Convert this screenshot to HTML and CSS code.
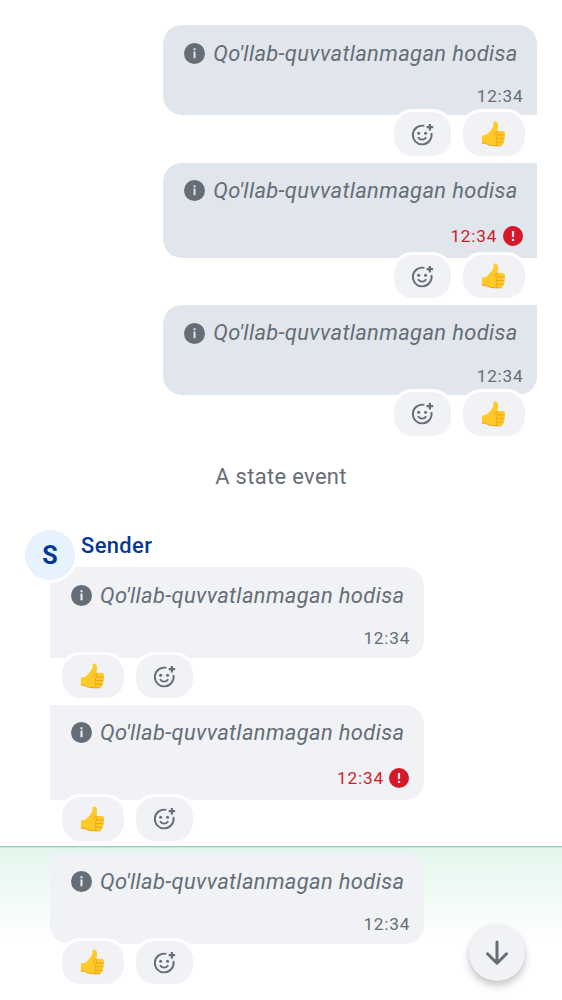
FILE: index.html
```html
<!DOCTYPE html>
<html lang="uz">
<head>
<meta charset="utf-8">
<title>Timeline</title>
<link rel="stylesheet" href="styles.css">
</head>
<body>
<svg class="defs" aria-hidden="true">
  <symbol id="info" viewBox="0 0 21 21"><circle cx="10.5" cy="10.5" r="10.5" fill="currentColor"/><path class="mark" d="M9.5 5.2h2v2.1h-2zM9.5 8.5h2v6.8h-2z"/></symbol>
  <symbol id="error" viewBox="0 0 20 20"><circle cx="10" cy="10" r="10" fill="currentColor"/><path class="mark" d="M8.9 5h2.2v6H8.9zM8.9 12.8h2.2V15H8.9z"/></symbol>
  <symbol id="react" viewBox="0 0 24 24"><g fill="none" stroke="currentColor" stroke-width="2"><path d="M14 3A9.8 9.8 0 1 0 21.3 10.5"/><path d="M7.4 14.8q1.3 2.5 4.2 2.5t4.2-2.5" stroke-width="1.9"/><path d="M19.7 1v6.8M16.3 4.4h6.8" stroke-width="2.3"/></g><g fill="currentColor"><circle cx="8" cy="10.6" r="1.6"/><circle cx="15.2" cy="10.6" r="1.6"/></g></symbol>
  <symbol id="thumb" viewBox="0 0 25 27"><path fill="#ffc928" d="M1 14.8c3.7 0 5.8-1.5 7.6-3.8 2.4-3 4-4.4 4.2-7.2V2.6C12.8.7 14.2.3 15.4.8c2.3 1 2.5 4.3 1.6 8l-.3 1.3h5.4c2.5 0 3.1 2.8 1.6 4 1.3 1 1 3-.2 3.8.9 1.1.5 2.9-.8 3.6.6 1 .2 2.4-1 3-1 .7-3.5 1-7.4 1-3.4 0-5.8-.4-7.5-1.5-1.5-1-3.4-1.2-5.8-1.4z"/><path fill="none" stroke="#e9a41b" stroke-width="1" stroke-linecap="round" d="M16.8 10.2c-1.7.5-3.3 2-3.1 4M24 14.2h-6.8M23.5 18h-6.9M22.6 21.6h-6.3M17.5 11c-1.3.8-1.5 2.4-.3 3.2-1.7.6-1.9 3-.6 3.8-1.5.6-1.6 2.9-.3 3.6-1.1.8-1 2.7.4 3.3M1.2 22.4q3.8.2 5.8 1.4 2.4 1.5 7.4 1.5h6"/></symbol>
</svg>
<main class="timeline">
  <section class="group outgoing">
    <article class="event">
      <div class="bubble first"><p class="body"><svg class="info"><use href="#info"/></svg><i>Qo'llab-quvvatlanmagan hodisa</i></p><div class="meta"><time>12:34</time></div></div>
      <div class="reactions"><span class="pill add"><svg class="smile"><use href="#react"/></svg></span><span class="pill"><svg class="thumb"><use href="#thumb"/></svg></span></div>
    </article>
    <article class="event">
      <div class="bubble middle"><p class="body"><svg class="info"><use href="#info"/></svg><i>Qo'llab-quvvatlanmagan hodisa</i></p><div class="meta failed"><time>12:34</time><svg class="error"><use href="#error"/></svg></div></div>
      <div class="reactions"><span class="pill add"><svg class="smile"><use href="#react"/></svg></span><span class="pill"><svg class="thumb"><use href="#thumb"/></svg></span></div>
    </article>
    <article class="event">
      <div class="bubble last"><p class="body"><svg class="info"><use href="#info"/></svg><i>Qo'llab-quvvatlanmagan hodisa</i></p><div class="meta"><time>12:34</time></div></div>
      <div class="reactions"><span class="pill add"><svg class="smile"><use href="#react"/></svg></span><span class="pill"><svg class="thumb"><use href="#thumb"/></svg></span></div>
    </article>
  </section>
  <p class="state">A state event</p>
  <section class="group incoming">
    <header class="sender"><span class="avatar">S</span><span class="name">Sender</span></header>
    <article class="event">
      <div class="bubble first"><p class="body"><svg class="info"><use href="#info"/></svg><i>Qo'llab-quvvatlanmagan hodisa</i></p><div class="meta"><time>12:34</time></div></div>
      <div class="reactions"><span class="pill"><svg class="thumb"><use href="#thumb"/></svg></span><span class="pill add"><svg class="smile"><use href="#react"/></svg></span></div>
    </article>
    <article class="event">
      <div class="bubble middle"><p class="body"><svg class="info"><use href="#info"/></svg><i>Qo'llab-quvvatlanmagan hodisa</i></p><div class="meta failed"><time>12:34</time><svg class="error"><use href="#error"/></svg></div></div>
      <div class="reactions"><span class="pill"><svg class="thumb"><use href="#thumb"/></svg></span><span class="pill add"><svg class="smile"><use href="#react"/></svg></span></div>
    </article>
    <article class="event highlighted">
      <div class="bubble last"><p class="body"><svg class="info"><use href="#info"/></svg><i>Qo'llab-quvvatlanmagan hodisa</i></p><div class="meta"><time>12:34</time></div></div>
      <div class="reactions"><span class="pill"><svg class="thumb"><use href="#thumb"/></svg></span><span class="pill add"><svg class="smile"><use href="#react"/></svg></span></div>
    </article>
  </section>
  <button class="jump" aria-label="Jump to bottom"><svg viewBox="0 0 28 28"><path d="M14 3v21M4.5 14.8 14 24.3l9.5-9.5"/></svg></button>
</main>
</body>
</html>
```
FILE: styles.css
```css
* { box-sizing: border-box; }
body { margin: 0; background: #fff; color: #656d77; font-family: Roboto, sans-serif; }
p { margin: 0; }
svg { display: block; flex: none; }
.defs { position: absolute; width: 0; height: 0; }
.timeline { position: relative; height: 1000px; padding-top: 25px; overflow: hidden; }
.group { display: flex; flex-direction: column; }
.event { display: flex; flex-direction: column; height: 137.5px; }
.event:has(.middle) { height: 142.3px; }
.outgoing .event { align-items: flex-end; padding-right: 25px; }
.incoming .event { align-items: flex-start; padding-left: 50px; }
.bubble { --surface: #e1e6ec; display: flex; flex-direction: column; justify-content: space-between; width: 373.7px; height: 90.3px; padding: 12.4px 13.5px 8.4px 21px; background: var(--surface); flex: none; }
.bubble.middle { height: 95.2px; padding-top: 12px; padding-bottom: 11px; padding-right: 14.3px; }
.incoming .bubble { --surface: #f0f2f5; }
.outgoing .first { border-radius: 19px 19px 0 19px; }
.outgoing .middle { border-radius: 19px 0 0 19px; }
.outgoing .last { border-radius: 19px 0 19px 19px; }
.incoming .first { border-radius: 0 19px 19px 0; }
.incoming .middle { border-radius: 0 19px 19px 0; }
.incoming .last { border-radius: 0 19px 19px 19px; }
.mark { fill: var(--surface, #e9ecf0); }
.body { display: flex; align-items: center; gap: 8px; height: 32px; font-size: 21.9px; line-height: 33px; letter-spacing: .36px; white-space: nowrap; }
.middle .body, .outgoing .last .body { line-height: 32px; }
.info { width: 21px; height: 21px; }
.meta { display: flex; justify-content: flex-end; align-items: center; gap: 5.5px; height: 22px; font-size: 17.2px; line-height: 22px; letter-spacing: .8px; }
.failed { color: #d51928; }
.error { width: 20px; height: 20px; }
.reactions { display: flex; gap: 6px; margin-top: -6px; padding: 0 9px; }
.pill { display: flex; align-items: center; justify-content: center; width: 68px; height: 49.5px; border: 3px solid #fff; border-radius: 22px; background: #f0f2f5; }
.add { width: 62.5px; }
.outgoing .reactions { padding-right: 9.5px; }
.smile { width: 23px; height: 23px; }
.thumb { width: 24.5px; height: 26.5px; margin-right: 1px; }
.state { height: 88.2px; padding-top: 19px; text-align: center; font-size: 21.9px; line-height: 32px; letter-spacing: .35px; }
.sender { display: flex; height: 40px; padding-left: 22px; margin-top: -3px; position: relative; }
.avatar { display: flex; align-items: center; justify-content: center; width: 56px; height: 56px; flex: none; border: 3px solid #fff; border-radius: 50%; background: #e7f2ff; color: #043894; font-size: 25px; font-weight: 700; }
.name { padding: 2.5px 0 0 3px; color: #043894; font-size: 21.9px; line-height: 31px; font-weight: 500; letter-spacing: .4px; }
.highlighted { height: 150px; margin-top: -1.2px; padding-top: 6.3px; border-top: 1px solid #98cbbb; background: linear-gradient(#c5e6da 1px, #e3f7ed 1px, #fff 94px); }
.jump { position: absolute; right: 37.5px; top: 925px; display: flex; align-items: center; justify-content: center; width: 56px; height: 56px; padding: 0; border: 0; border-radius: 50%; background: #f0f2f5; box-shadow: 0 5px 8px #0003, 0 1px 6px #0001; }
.jump svg { width: 28px; height: 28px; fill: none; stroke: #656d77; stroke-width: 3; stroke-linecap: round; stroke-linejoin: round; }
```
